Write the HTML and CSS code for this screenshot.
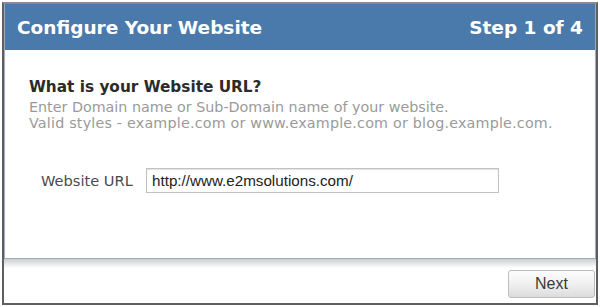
FILE: index.html
```html
<!DOCTYPE html>
<html>
<head>
<meta charset="utf-8">
<link rel="stylesheet" href="styles.css">
</head>
<body>
<div class="frame">
  <div class="panel">
    <div class="header">
      <span class="title">Configure Your Website</span>
      <span class="step">Step 1 of 4</span>
    </div>
    <div class="body">
      <h2 class="question">What is your Website URL?</h2>
      <p class="hint">Enter Domain name or Sub-Domain name of your website.<br><span class="wide">Valid styles - example.com or www.example.com or blog.example.com.</span></p>
      <div class="field">
        <label class="label" for="url">Website URL</label>
        <input class="input" id="url" type="text" value="http://www.e2msolutions.com/">
      </div>
    </div>
  </div>
  <div class="footer">
    <button class="next">Next</button>
  </div>
</div>
</body>
</html>
```
FILE: styles.css
```css
html, body { margin: 0; padding: 0; background: #fff; }
.frame {
  box-sizing: border-box;
  width: 596px;
  height: 303px;
  margin: 2px 0 0 2px;
  border: 2px solid #5f5f5f;
  border-top-color: #8a8a8a;
  display: flex;
  flex-direction: column;
}
.panel {
  box-sizing: border-box;
  height: 255px;
  border: 1px solid #9aabbd;
  border-top: none;
  display: flex;
  flex-direction: column;
}
.header {
  height: 46px;
  background: #4a7aac;
  display: flex;
  align-items: center;
  justify-content: space-between;
  padding: 0 12px 0 12px;
  color: #fff;
  font-family: "DejaVu Sans", sans-serif;
  font-weight: bold;
  font-size: 18.5px;
}
.body {
  flex: 1;
  background: #fff;
  padding: 27px 0 0 24px;
  font-family: "DejaVu Sans", sans-serif;
}
.question {
  margin: 0;
  font-family: "DejaVu Sans", sans-serif;
  font-size: 15.3px;
  font-weight: bold;
  color: #2b2b2b;
  line-height: 20px;
}
.hint {
  margin: 2px 0 0;
  font-size: 14.3px;
  color: #9a9a9a;
  line-height: 16px;
}
.wide { letter-spacing: 0.2px; }
.field {
  display: flex;
  align-items: center;
  margin: 37px 0 0 12px;
}
.label {
  font-size: 14.6px;
  color: #4a4a4a;
  width: 105px;
}
.input {
  box-sizing: border-box;
  width: 353px;
  height: 25px;
  border: 1px solid #c2c2c2;
  box-shadow: inset 0 1px 1px #e2e2e2;
  padding: 0 5px;
  font-family: "Liberation Sans", Arial, sans-serif;
  font-size: 15.2px;
  color: #222;
}
.footer {
  flex: 1;
  background: linear-gradient(#c9ced3, #fff 9px);
  display: flex;
  justify-content: flex-end;
  align-items: flex-start;
  padding: 11px 1px 0 0;
}
.next {
  width: 87px;
  height: 28px;
  border: 1px solid #bdbdbd;
  border-radius: 3px;
  background: linear-gradient(#fdfdfd, #f0f0f0 50%, #dcdcdc);
  font-family: "Liberation Sans", Arial, sans-serif;
  font-size: 16px;
  color: #3a3a3a;
  padding: 0;
}
```
